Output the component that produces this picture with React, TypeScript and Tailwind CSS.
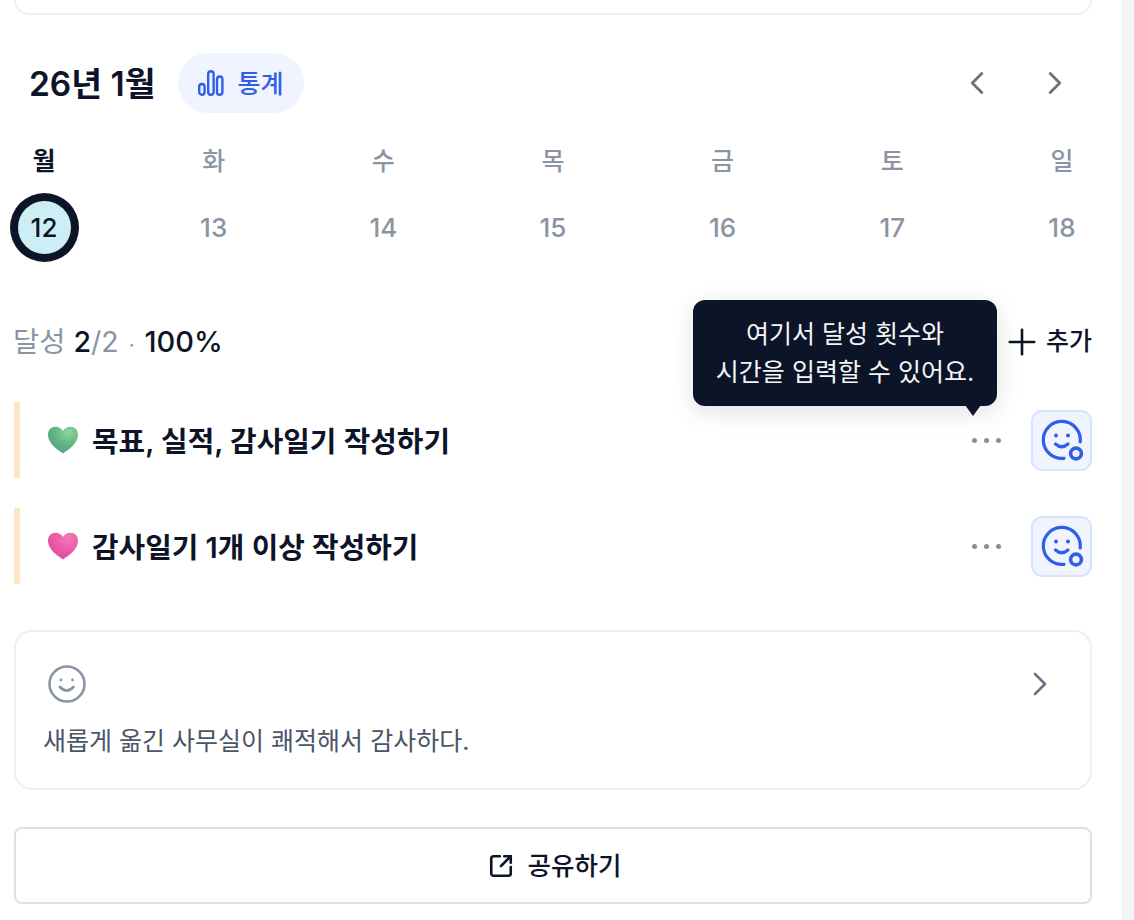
import { ChevronLeft, ChevronRight, Plus, SquareArrowOutUpRight } from "lucide-react";

const FONT = "font-['Inter','Noto_Sans_CJK_KR',sans-serif]";

const WEEK = [
  { label: "월", date: 12 },
  { label: "화", date: 13 },
  { label: "수", date: 14 },
  { label: "목", date: 15 },
  { label: "금", date: 16 },
  { label: "토", date: 17 },
  { label: "일", date: 18 },
];

function StatsIcon() {
  return (
    <svg width="26" height="26" viewBox="0 0 26 26" fill="none" stroke="#2f5fe8" strokeWidth="2.4">
      <rect x="1.2" y="14" width="5.4" height="10.8" rx="2.7" />
      <rect x="10.2" y="1.2" width="5.4" height="23.6" rx="2.7" />
      <rect x="19" y="6.5" width="5.4" height="18.3" rx="2.7" />
    </svg>
  );
}

function Heart({ id, light, mid, dark }: { id: string; light: string; mid: string; dark: string }) {
  return (
    <svg width="32" height="28" viewBox="0 0 32 28">
      <defs>
        <radialGradient id={id} cx="0.68" cy="0.2" r="0.9">
          <stop offset="0" stopColor={light} />
          <stop offset="0.5" stopColor={mid} />
          <stop offset="1" stopColor={dark} />
        </radialGradient>
      </defs>
      <path
        d="M16 27.5 C12.5 25 1 18 1 9 C1 3.5 4.5 0.8 8.5 0.8 C11.8 0.8 14.6 2.6 16 5 C17.4 2.6 20.2 0.8 23.5 0.8 C27.5 0.8 31 3.5 31 9 C31 18 19.5 25 16 27.5 Z"
        fill={`url(#${id})`}
      />
    </svg>
  );
}

function MoodIcon() {
  return (
    <svg width="44" height="44" viewBox="0 0 44 44" fill="none" stroke="#2f5fe8" strokeWidth="3.2" strokeLinecap="round">
      <path d="M40.2 24 A18.5 18.5 0 1 0 24 40.3" />
      <path d="M15.5 26 Q21.7 31.5 28 26" />
      <circle cx="16" cy="17.5" r="2" fill="#2f5fe8" stroke="none" />
      <circle cx="28" cy="17.5" r="2" fill="#2f5fe8" stroke="none" />
      <circle cx="36" cy="35.5" r="5.4" strokeWidth="3.6" />
    </svg>
  );
}

function Dots() {
  return (
    <div className="flex items-center gap-[7px]">
      <span className="size-[5px] rounded-full bg-[#868e9c]" />
      <span className="size-[5px] rounded-full bg-[#868e9c]" />
      <span className="size-[5px] rounded-full bg-[#868e9c]" />
    </div>
  );
}

function GoalRow({ title, icon }: { title: string; icon: React.ReactNode }) {
  return (
    <div className="flex h-[76px] items-center border-l-[6px] border-[#fde6c4] pl-[27px]">
      <div className="flex w-[32px] shrink-0 items-center">{icon}</div>
      <span className="ml-[13px] flex-1 pt-[3px] text-[28.9px] font-semibold text-[#0d1428]">{title}</span>
      <Dots />
      <button
        type="button"
        className="ml-[30px] flex size-[61px] items-center justify-center rounded-[11px] border-2 border-[#d8e3fd] bg-[#eff4fe]"
      >
        <MoodIcon />
      </button>
    </div>
  );
}

export default function App() {
  return (
    <div className={`${FONT} flex h-[920px] w-[1134px] overflow-hidden bg-[#f3f4f6]`}>
      <main className="h-full w-[1122px] bg-white pl-[14px] pr-[30px]">
        <div className="h-[15px] rounded-b-[18px] border-x-2 border-b-2 border-[#edeff3]" />

        <div className="mt-[38px] flex h-[60px] items-center">
          <h1 className="ml-[15px] pt-[2px] text-[33.5px] font-semibold text-[#0d1428]">26년 1월</h1>
          <button
            type="button"
            className="ml-[22px] flex h-[60px] w-[126px] items-center justify-center gap-[14px] rounded-full bg-[#eff4fe] text-[25px] font-medium text-[#2f5fe8]"
          >
            <StatsIcon />
            <span className="pt-[3px]">통계</span>
          </button>
          <div className="ml-auto mr-[18px] flex items-center gap-[40px] text-[#6b7484]">
            <ChevronLeft size={38} strokeWidth={1.8} />
            <ChevronRight size={38} strokeWidth={1.8} />
          </div>
        </div>

        <div className="mt-[29px] flex justify-between">
          {WEEK.map((d, i) => (
            <div key={d.label} className="flex w-[60px] flex-col items-center">
              <span className={`text-[25px] leading-[38px] ${i === 0 ? "font-semibold text-[#0d1428]" : "font-medium text-[#8b94a3]"}`}>
                {d.label}
              </span>
              <span
                className={`mt-[21px] flex size-[53px] items-center justify-center rounded-full text-[26px] font-[550] ${
                  i === 0 ? "bg-[#cdeef5] text-[#0d1428] ring-[8px] ring-[#0d1428]" : "text-[#8b94a3]"
                }`}
              >
                {d.date}
              </span>
            </div>
          ))}
        </div>

        <div className="relative mt-[58px] flex h-[60px] items-center">
          <p className="ml-[-1px] text-[28.5px] text-[#8b94a3]">
            달성 <span className="font-medium text-[#0d1428]">2</span>/2 <span className="ml-[2px] text-[20px]">·</span>{" "}
            <span className="ml-[2px] text-[29px] font-medium text-[#0d1428]">100%</span>
          </p>
          <div className="ml-auto flex items-center gap-[3px] text-[25px] font-medium text-[#0d1428]">
            <Plus size={42} strokeWidth={1.5} />
            추가
          </div>
          <div className="absolute left-[679px] top-[-12px] z-10 w-[304px] rounded-[12px] bg-[#0c1427] py-[15px] text-center text-[25px] leading-[38px] text-[#f4f5f7] shadow-[0_6px_24px_rgba(13,20,40,0.12)]">
            여기서 달성 횟수와
            <br />
            시간을 입력할 수 있어요.
            <span className="absolute bottom-[-10px] left-[272px] size-0 border-x-[8px] border-t-[11px] border-x-transparent border-t-[#0c1427]" />
          </div>
        </div>

        <div className="mt-[30px] flex flex-col gap-[30px]">
          <GoalRow title="목표, 실적, 감사일기 작성하기" icon={<Heart id="green" light="#8bd69a" mid="#63b683" dark="#4f9a86" />} />
          <GoalRow title="감사일기 1개 이상 작성하기" icon={<Heart id="pink" light="#f578b8" mid="#ea5ca8" dark="#d9489f" />} />
        </div>

        <div className="mt-[46px] h-[160px] rounded-[18px] border-2 border-[#edeff3] px-[30px] pt-[32px]">
          <div className="flex h-[40px] items-center justify-between">
            <svg width="40" height="40" viewBox="0 0 40 40" fill="none" stroke="#8b94a3" strokeWidth="2.6" strokeLinecap="round" className="ml-[1px]">
              <circle cx="20" cy="20" r="17.5" />
              <path d="M13 23 Q19.5 30 26.5 23" />
              <circle cx="14" cy="16" r="1.4" fill="#8b94a3" stroke="none" />
              <circle cx="25.5" cy="16" r="1.4" fill="#8b94a3" stroke="none" />
            </svg>
            <ChevronRight size={40} strokeWidth={1.6} className="text-[#6b7484]" />
          </div>
          <p className="ml-[-3px] mt-[19px] text-[25px] leading-[36px] text-[#4a5568]">새롭게 옮긴 사무실이 쾌적해서 감사하다.</p>
        </div>

        <button
          type="button"
          className="mt-[37px] flex h-[77px] w-full items-center justify-center gap-[14px] rounded-[8px] border-2 border-[#dde0ea] pl-[3px] text-[25.5px] font-medium text-[#0d1428]"
        >
          <SquareArrowOutUpRight size={26} strokeWidth={2.4} />
          <span className="pt-[2px]">공유하기</span>
        </button>
      </main>
    </div>
  );
}
